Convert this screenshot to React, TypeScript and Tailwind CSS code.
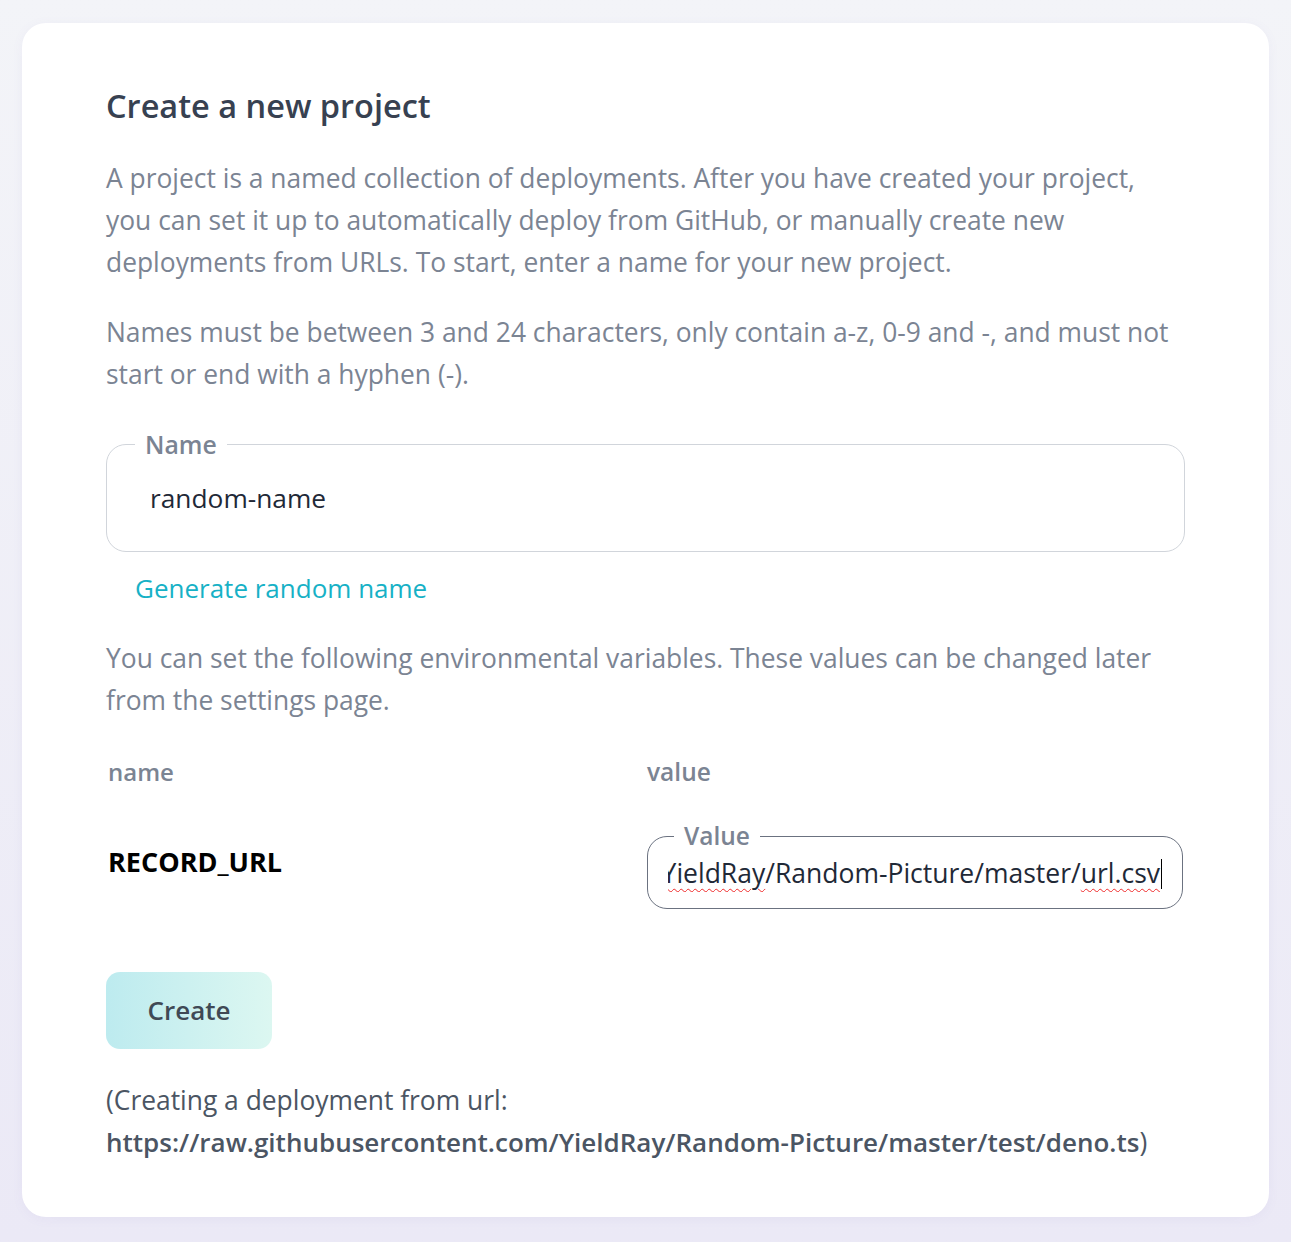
import React from 'react';

const font = { fontFamily: '"Open Sans", "Noto Sans", sans-serif' };

const App = () => {
  return (
    <div
      className="min-h-screen w-full bg-gradient-to-b from-[#f3f4f8] to-[#ebe9f6] px-[22px] pt-[23px] pb-[25px]"
      style={font}
    >
      <div className="rounded-[24px] bg-white px-[84px] pt-[63px] pb-[54px] shadow-[0_2px_12px_rgba(120,110,180,0.06)]">
        <h1 className="text-[32.5px] leading-[40px] font-semibold text-[#374151]">Create a new project</h1>

        <p className="mt-[31px] text-[26.4px] leading-[42px] text-[#7b8493]">
          A project is a named collection of deployments. After you have created your project, you can set it
          up to automatically deploy from GitHub, or manually create new deployments from URLs. To start,
          enter a name for your new project.
        </p>

        <p className="mt-[28px] text-[26.4px] leading-[42px] text-[#7b8493]">
          Names must be between 3 and 24 characters, only contain a-z, 0-9 and -, and must not start or end
          with a hyphen (-).
        </p>

        {/* Name field */}
        <fieldset className="mt-[33px] rounded-[20px] border border-[#d1d5db]">
          <legend className="ml-[28px] px-[10px] text-[24.8px] leading-[32px] font-semibold text-[#7b8493]">
            Name
          </legend>
          <div className="pl-[43px] pt-[22px] pb-[37px] text-[26.3px] leading-[32px] text-[#1f2937]">random-name</div>
        </fieldset>

        <button className="mt-[15px] pl-[29px] text-[26px] leading-[42px] text-[#17b1c6]">Generate random name</button>

        <p className="mt-[28px] text-[26.4px] leading-[42px] text-[#7b8493]">
          You can set the following environmental variables. These values can be changed later from the
          settings page.
        </p>

        {/* Env vars */}
        <div className="mt-[35px] grid grid-cols-[539px_1fr] pl-[2px] pr-[2px]">
          <div className="text-[24px] leading-[32px] font-semibold text-[#7b8493]">name</div>
          <div className="text-[24.5px] leading-[32px] font-semibold text-[#7b8493]">value</div>

          <div className="mt-[32px] flex items-center pb-[4px] text-[27px] font-bold text-black">RECORD_URL</div>
          <fieldset className="mt-[32px] min-w-0 rounded-[20px] border border-[#6b7280]">
            <legend className="ml-[26px] px-[10px] text-[24.5px] leading-[32px] font-semibold text-[#7b8493]">
              Value
            </legend>
            <div className="mx-[20px] mb-[16px] flex justify-end overflow-hidden whitespace-nowrap pt-[1px] text-[26.5px] leading-[38px] text-[#1f2937]">
              <span>
                https://raw.githubusercontent.com/
                <span className="underline decoration-wavy decoration-[#ef2b2b] decoration-1 underline-offset-[5px]">
                  YieldRay
                </span>
                /Random-Picture/master/
                <span className="underline decoration-wavy decoration-[#ef2b2b] decoration-1 underline-offset-[5px]">
                  url.csv
                </span>
                <span className="ml-[1px] inline-block h-[30px] w-px translate-y-[6px] bg-black" />
              </span>
            </div>
          </fieldset>
        </div>

        <button className="mt-[63px] h-[77px] w-[166px] rounded-[14px] bg-gradient-to-r from-[#bdebef] to-[#dcf7f1] text-[26px] font-semibold text-[#3f4955]">
          Create
        </button>

        <p className="mt-[30px] text-[26.4px] leading-[42px] text-[#4b5563]">
          (Creating a deployment from url:
          <br />
          <span className="text-[26px] font-semibold">
            https://raw.githubusercontent.com/YieldRay/Random-Picture/master/test/deno.ts
          </span>
          )
        </p>
      </div>
    </div>
  );
};

export default App;
